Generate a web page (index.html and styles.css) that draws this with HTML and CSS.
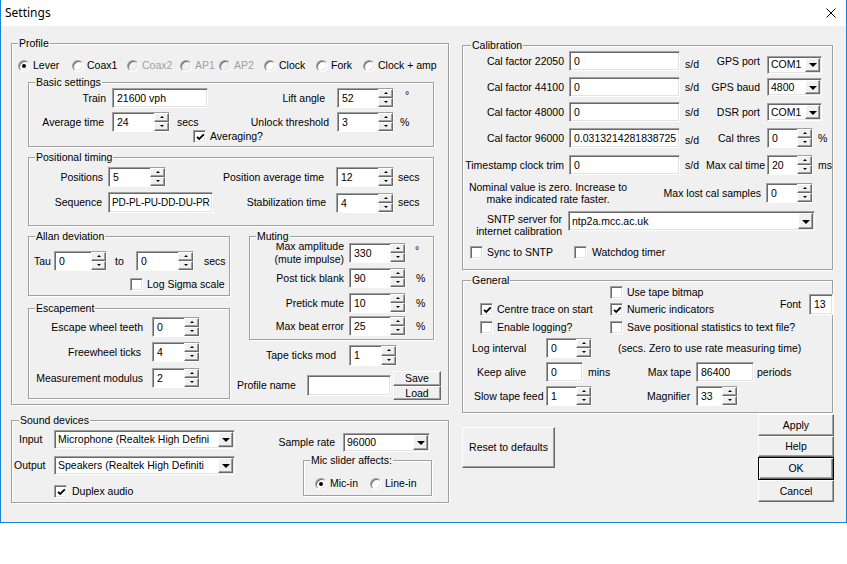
FILE: index.html
```html
<!DOCTYPE html>
<html>
<head>
<meta charset="utf-8">
<title>Settings</title>
<link rel="stylesheet" href="styles.css">
</head>
<body>
<div class="win">
  <div class="titlebar">
    <span class="title">Settings</span>
    <svg class="close" viewBox="0 0 10 10"><path d="M0.5 0.5L9.5 9.5M9.5 0.5L0.5 9.5" stroke="#000" stroke-width="1" fill="none"/></svg>
  </div>
  <div class="client">
    <div class="colL">
      <div class="grp g-profile">
        <span class="lg">Profile</span>
        <div class="radios">
          <span class="rb on w54"><i class="rd"></i>Lever</span>
          <span class="rb w55"><i class="rd"></i>Coax1</span>
          <span class="rb dis w53"><i class="rd"></i>Coax2</span>
          <span class="rb dis w39"><i class="rd"></i>AP1</span>
          <span class="rb dis w45"><i class="rd"></i>AP2</span>
          <span class="rb w52"><i class="rd"></i>Clock</span>
          <span class="rb w47"><i class="rd"></i>Fork</span>
          <span class="rb"><i class="rd"></i>Clock + amp</span>
        </div>

        <div class="grp g-basic">
          <span class="lg">Basic settings</span>
          <div class="row mt5">
            <span class="lbl r w77">Train</span>
            <span class="ed w96 ml6">21600 vph</span>
            <span class="lbl r w117">Lift angle</span>
            <span class="sp w57 ml12"><span class="v">52</span><span class="ud"><b class="up"></b><b class="dn"></b></span></span>
            <span class="ml11 deg">°</span>
          </div>
          <div class="row mt4">
            <span class="lbl r w75">Average time</span>
            <span class="sp w58 ml8"><span class="v">24</span><span class="ud"><b class="up"></b><b class="dn"></b></span></span>
            <span class="lbl w40 pl7">secs</span>
            <span class="lbl r w119">Unlock threshold</span>
            <span class="sp w57 ml8"><span class="v">3</span><span class="ud"><b class="up"></b><b class="dn"></b></span></span>
            <span class="ml6">%</span>
          </div>
          <div class="ckrow mtm2 ml164">
            <span class="ckb"><i class="ck on"><svg viewBox="0 0 9 9"><path d="M1 3.8L3.2 6L7.8 1.4" stroke="#000" stroke-width="1.8" fill="none"/></svg></i>Averaging?</span>
          </div>
        </div>

        <div class="grp g-pos">
          <span class="lg">Positional timing</span>
          <div class="row mt9">
            <span class="lbl r w74">Positions</span>
            <span class="sp w58 ml5"><span class="v">5</span><span class="ud"><b class="up"></b><b class="dn"></b></span></span>
            <span class="lbl r w158">Position average time</span>
            <span class="sp w58 ml12"><span class="v">12</span><span class="ud"><b class="up"></b><b class="dn"></b></span></span>
            <span class="ml4">secs</span>
          </div>
          <div class="row mt5 h21">
            <span class="lbl r w73">Sequence</span>
            <span class="ed w105 ml6 h21 tight">PD-PL-PU-DD-DU-PR</span>
            <span class="lbl r w113">Stabilization time</span>
            <span class="sp w58 ml10"><span class="v">4</span><span class="ud"><b class="up"></b><b class="dn"></b></span></span>
            <span class="ml4">secs</span>
          </div>
        </div>

        <div class="lower">
          <div class="lowL">
            <div class="grp g-allan">
              <span class="lg">Allan deviation</span>
              <div class="row mt14">
                <span class="lbl w20 ml5">Tau</span>
                <span class="sp w53"><span class="v">0</span><span class="ud"><b class="up"></b><b class="dn"></b></span></span>
                <span class="lbl w29 pl8">to</span>
                <span class="sp w58"><span class="v">0</span><span class="ud"><b class="up"></b><b class="dn"></b></span></span>
                <span class="pl10">secs</span>
              </div>
              <div class="ckrow mt7 ml101">
                <span class="ckb"><i class="ck"></i>Log Sigma scale</span>
              </div>
            </div>
            <div class="grp g-esc">
              <span class="lg">Escapement</span>
              <div class="row mt8">
                <span class="lbl r w114">Escape wheel teeth</span>
                <span class="sp w48 ml9"><span class="v">0</span><span class="ud"><b class="up"></b><b class="dn"></b></span></span>
              </div>
              <div class="row mt5">
                <span class="lbl r w112">Freewheel ticks</span>
                <span class="sp w48 ml11"><span class="v">4</span><span class="ud"><b class="up"></b><b class="dn"></b></span></span>
              </div>
              <div class="row mt6">
                <span class="lbl r w114">Measurement modulus</span>
                <span class="sp w48 ml9"><span class="v">2</span><span class="ud"><b class="up"></b><b class="dn"></b></span></span>
              </div>
            </div>
          </div>
          <div class="lowR">
            <div class="grp g-mute">
              <span class="lg">Muting</span>
              <div class="row mt6">
                <span class="lbl ra w94">Max amplitude<br>(mute impulse)</span>
                <span class="sp w57 ml5"><span class="v">330</span><span class="ud"><b class="up"></b><b class="dn"></b></span></span>
                <span class="ml9 deg">°</span>
              </div>
              <div class="row mt5">
                <span class="lbl r w94">Post tick blank</span>
                <span class="sp w57 ml5"><span class="v">90</span><span class="ud"><b class="up"></b><b class="dn"></b></span></span>
                <span class="ml10">%</span>
              </div>
              <div class="row mt5">
                <span class="lbl r w94">Pretick mute</span>
                <span class="sp w57 ml5"><span class="v">10</span><span class="ud"><b class="up"></b><b class="dn"></b></span></span>
                <span class="ml10">%</span>
              </div>
              <div class="row mt3">
                <span class="lbl r w94">Max beat error</span>
                <span class="sp w57 ml5"><span class="v">25</span><span class="ud"><b class="up"></b><b class="dn"></b></span></span>
                <span class="ml10">%</span>
              </div>
            </div>
            <div class="row mt5 h21">
              <span class="lbl r w87">Tape ticks mod</span>
              <span class="sp w48 ml13 h21"><span class="v">1</span><span class="ud"><b class="up"></b><b class="dn"></b></span></span>
            </div>
            <div class="row mt5 h29 mlm12">
              <span class="lbl w70">Profile name</span>
              <span class="ed w84 h21"></span>
              <span class="savload ml2">
                <span class="btn h15">Save</span>
                <span class="btn h14">Load</span>
              </span>
            </div>
          </div>
        </div>
      </div>

      <div class="grp g-sound">
        <span class="lg lg7">Sound devices</span>
        <div class="snd">
          <div class="sndL">
            <div class="row mt9 h19">
              <span class="lbl w35 ml7">Input</span>
              <span class="cb w181"><span class="v">Microphone (Realtek High Defini</span><span class="dd"><i></i></span></span>
            </div>
            <div class="row mt7 h19">
              <span class="lbl w40 ml2">Output</span>
              <span class="cb w181"><span class="v">Speakers (Realtek High Definiti</span><span class="dd"><i></i></span></span>
            </div>
            <div class="ckrow mt10 ml42">
              <span class="ckb gap5"><i class="ck on"><svg viewBox="0 0 9 9"><path d="M1 3.8L3.2 6L7.8 1.4" stroke="#000" stroke-width="1.8" fill="none"/></svg></i>Duplex audio</span>
            </div>
          </div>
          <div class="sndR">
            <div class="row mt12 h19 mr2">
              <span class="lbl">Sample rate</span>
              <span class="cb w87 ml8"><span class="v">96000</span><span class="dd"><i></i></span></span>
            </div>
            <div class="grp g-mic">
              <span class="lg">Mic slider affects:</span>
              <div class="radios mic">
                <span class="rb on w55"><i class="rd"></i>Mic-in</span>
                <span class="rb"><i class="rd"></i>Line-in</span>
              </div>
            </div>
          </div>
        </div>
      </div>
    </div>

    <div class="colR">
      <div class="grp g-cal">
        <span class="lg lg8">Calibration</span>
        <div class="row mt5">
          <span class="lbl r w101">Cal factor 22050</span>
          <span class="ed w111 ml5">0</span>
          <span class="lbl w30 pl5 low">s/d</span>
          <span class="lbl r w50">GPS port</span>
          <span class="cb w55 ml7 h18 low7"><span class="v">COM1</span><span class="dd"><i></i></span></span>
        </div>
        <div class="row mt6">
          <span class="lbl r w101">Cal factor 44100</span>
          <span class="ed w111 ml5">0</span>
          <span class="lbl w30 pl5">s/d</span>
          <span class="lbl r w50">GPS baud</span>
          <span class="cb w55 ml7 h18"><span class="v">4800</span><span class="dd"><i></i></span></span>
        </div>
        <div class="row mt5">
          <span class="lbl r w101">Cal factor 48000</span>
          <span class="ed w111 ml5">0</span>
          <span class="lbl w30 pl5">s/d</span>
          <span class="lbl r w50">DSR port</span>
          <span class="cb w55 ml7 h18"><span class="v">COM1</span><span class="dd"><i></i></span></span>
        </div>
        <div class="row mt6">
          <span class="lbl r w101">Cal factor 96000</span>
          <span class="ed w111 ml5">0.0313214281838725</span>
          <span class="lbl w30 pl5 low4">s/d</span>
          <span class="lbl r w50">Cal thres</span>
          <span class="sp w46 ml7"><span class="v">0</span><span class="ud"><b class="up"></b><b class="dn"></b></span></span>
          <span class="ml5">%</span>
        </div>
        <div class="row mt7">
          <span class="lbl r w101">Timestamp clock trim</span>
          <span class="ed w111 ml5">0</span>
          <span class="lbl w30 pl5">s/d</span>
          <span class="lbl r w55">Max cal time</span>
          <span class="sp w46 ml2"><span class="v">20</span><span class="ud"><b class="up"></b><b class="dn"></b></span></span>
          <span class="ml5">ms</span>
        </div>
        <div class="row mt6 h24">
          <span class="note w170">Nominal value is zero. Increase to<br>make indicated rate faster.</span>
          <span class="lbl r w128">Max lost cal samples</span>
          <span class="sp w47 ml5"><span class="v">0</span><span class="ud"><b class="up"></b><b class="dn"></b></span></span>
        </div>
        <div class="row mt6 h26 top">
          <span class="lbl ra lh12 w99 mt2">SNTP server for<br>internet calibration</span>
          <span class="cb w247 ml6 h20"><span class="v">ntp2a.mcc.ac.uk</span><span class="dd"><i></i></span></span>
        </div>
        <div class="ckrow mt9 ml7">
          <span class="ckb w104"><i class="ck"></i>Sync to SNTP</span>
          <span class="ckb gap5"><i class="ck"></i>Watchdog timer</span>
        </div>
      </div>

      <div class="grp g-gen">
        <span class="lg lg8">General</span>
        <div class="gen-top">
          <span class="ckb c2 r1"><i class="ck"></i>Use tape bitmap</span>
          <span class="ckb c1 r2"><i class="ck on"><svg viewBox="0 0 9 9"><path d="M1 3.8L3.2 6L7.8 1.4" stroke="#000" stroke-width="1.8" fill="none"/></svg></i>Centre trace on start</span>
          <span class="ckb c2 r2"><i class="ck on"><svg viewBox="0 0 9 9"><path d="M1 3.8L3.2 6L7.8 1.4" stroke="#000" stroke-width="1.8" fill="none"/></svg></i>Numeric indicators</span>
          <span class="ckb c1 r3"><i class="ck"></i>Enable logging?</span>
          <span class="ckb c2s r3"><i class="ck"></i>Save positional statistics to text file?</span>
          <span class="font-cell">
            <span>Font</span>
            <span class="ed w24 h21 ml8">13</span>
          </span>
        </div>
        <div class="row mt4">
          <span class="lbl w83 pl9">Log interval</span>
          <span class="sp w46"><span class="v">0</span><span class="ud"><b class="up"></b><b class="dn"></b></span></span>
          <span class="ml26">(secs. Zero to use rate measuring time)</span>
        </div>
        <div class="row mt4">
          <span class="lbl w83 pl14">Keep alive</span>
          <span class="ed w37">0</span>
          <span class="lbl w57 pl5">mins</span>
          <span class="lbl r w51">Max tape</span>
          <span class="ed w58 ml5">86400</span>
          <span class="ml3">periods</span>
        </div>
        <div class="row mt4">
          <span class="lbl w83 pl11">Slow tape feed</span>
          <span class="sp w46"><span class="v">1</span><span class="ud"><b class="up"></b><b class="dn"></b></span></span>
          <span class="lbl w104 pl55">Magnifier</span>
          <span class="sp w42"><span class="v">33</span><span class="ud"><b class="up"></b><b class="dn"></b></span></span>
        </div>
      </div>

      <div class="btnrow">
        <span class="btn w93 h41 mt13">Reset to defaults</span>
        <div class="bcol">
          <span class="btn h22">Apply</span>
          <span class="btn h21">Help</span>
          <span class="btn def h23">OK</span>
          <span class="btn h22">Cancel</span>
        </div>
      </div>
    </div>
  </div>
</div>
</body>
</html>
```

FILE: styles.css
```css
* { box-sizing: border-box; }
html, body { margin: 0; padding: 0; background: #fff; }
body { font: 10.5px/13px "Liberation Sans", Arial, sans-serif; color: #000; }

.win {
  width: 847px; height: 523px;
  border: 1px solid #1883d7; border-top: 0;
  display: flex; flex-direction: column;
}
.titlebar {
  height: 26px; flex: none; background: #fff;
  display: flex; align-items: center; justify-content: space-between;
  padding: 0 10px 0 4px;
}
.title { font: 12px/16px "Noto Sans", "Open Sans", sans-serif; }
.close { width: 10px; height: 10px; display: block; }

.client { flex: 1; background: #f0f0f0; display: flex; align-items: flex-start; }
.colL { margin-left: 10px; width: 438px; }
.colR { margin-left: 13px; width: 372px; }

/* group boxes */
.grp {
  position: relative;
  border: 1px solid #a0a0a0;
  box-shadow: inset 1px 1px #fff, 1px 1px #fff;
}
.lg {
  position: absolute; top: -7px; left: 6px;
  padding: 0 1px; background: #f0f0f0; white-space: nowrap; line-height: 13px;
}
.lg7 { left: 7px; }
.lg8 { left: 8px; }

.g-profile { margin-top: 17px; width: 438px; height: 362px; }
.g-basic { margin: 10px 0 0 16px; width: 406px; height: 65px; }
.g-pos { margin: 10px 0 0 16px; width: 406px; height: 69px; }
.lower { display: flex; margin: 10px 0 0 16px; }
.lowR { margin-left: 19px; }
.g-allan { width: 202px; height: 60px; }
.g-esc { margin-top: 12px; width: 202px; height: 91px; }
.g-mute { width: 185px; height: 104px; }
.g-sound { margin-top: 15px; width: 438px; height: 83px; }
.snd { display: flex; }
.sndL { width: 258px; }
.sndR { width: 162px; display: flex; flex-direction: column; align-items: flex-end; }
.g-mic { margin-top: 8px; width: 129px; height: 36px; }
.g-cal { margin-top: 19px; width: 371px; height: 225px; }
.g-gen { margin-top: 10px; width: 371px; height: 133px; }

/* rows */
.row { display: flex; align-items: center; height: 20px; white-space: nowrap; }
.row.top { align-items: flex-start; }
.ckrow { display: flex; align-items: center; height: 13px; white-space: nowrap; }
.lbl { flex: none; white-space: nowrap; }
.r { display: flex; justify-content: flex-end; }
.ra { text-align: right; }
.lh12 { line-height: 12px; }
.note { flex: none; text-align: center; line-height: 12px; }
.deg { align-self: flex-start; margin-top: 1px; }
.low { margin-top: 7px; }
.low4 { margin-top: 4px; }
.low7 { margin-top: 7px; }
.ed.tight { padding-left: 3px; font-size: 10px; letter-spacing: -0.1px; }

/* radios */
.radios { display: flex; align-items: center; height: 13px; margin: 15px 0 0 6px; white-space: nowrap; }
.radios.mic { margin: 16px 0 0 11px; }
.rb { display: flex; align-items: center; gap: 3px; flex: none; }
.rd {
  position: relative; display: block; flex: none;
  width: 12px; height: 12px; border-radius: 50%;
  background: #fff;
  border: 1px solid; border-color: #a0a0a0 #fff #fff #a0a0a0;
  box-shadow: inset 1px 1px #696969, inset -1px -1px #e3e3e3;
}
.rb.on .rd::after {
  content: ""; position: absolute; left: 3px; top: 3px;
  width: 4px; height: 4px; border-radius: 50%; background: #000;
}
.rb.dis { color: #a0a0a0; }
.rb.dis .rd { background: #f0f0f0; }

/* checkboxes */
.ckb { display: flex; align-items: center; gap: 4px; flex: none; white-space: nowrap; }
.gap5 { gap: 5px; }
.ck {
  display: flex; align-items: center; justify-content: center; flex: none;
  width: 13px; height: 13px; background: #fff;
  border: 1px solid; border-color: #a0a0a0 #fff #fff #a0a0a0;
  box-shadow: inset 1px 1px #696969, inset -1px -1px #e3e3e3;
}
.ck svg { width: 9px; height: 9px; display: block; margin: 1px 0 0 1px; }

/* edit fields */
.ed {
  flex: none; display: block; height: 20px;
  background: #fff;
  border: 1px solid; border-color: #a0a0a0 #fff #fff #a0a0a0;
  box-shadow: inset 1px 1px #696969, inset -1px -1px #e3e3e3;
  padding-left: 4px; line-height: 18px;
  white-space: nowrap; overflow: hidden;
}
.ed.h21 { height: 21px; line-height: 19px; }

/* spinners */
.sp {
  flex: none; display: flex; height: 20px;
  background: #fff;
  border: 1px solid; border-color: #a0a0a0 #fff #fff #a0a0a0;
  box-shadow: inset 1px 1px #696969;
}
.sp.h21 { height: 21px; }
.sp .v { flex: 1; padding-left: 4px; line-height: 18px; overflow: hidden; }
.ud { width: 15px; display: flex; flex-direction: column; flex: none; }
.ud b {
  flex: 1; display: flex; align-items: center; justify-content: center;
  background: #f0f0f0;
  border: 1px solid; border-color: #fff #696969 #696969 #fff;
  box-shadow: inset -1px -1px #a0a0a0;
}
.ud b::after { content: ""; width: 0; height: 0; border-left: 2px solid transparent; border-right: 2px solid transparent; }
.ud b.up::after { border-bottom: 2px solid #000; margin-top: -1px; }
.ud b.dn::after { border-top: 2px solid #000; margin-top: -1px; }

/* combo boxes */
.cb {
  flex: none; display: flex; height: 19px; padding: 1px;
  background: #fff;
  border: 1px solid; border-color: #a0a0a0 #fff #fff #a0a0a0;
  box-shadow: inset 1px 1px #696969, inset -1px -1px #e3e3e3;
}
.cb.h18 { height: 18px; }
.cb.h20 { height: 20px; }
.cb .v { flex: 1; padding-left: 2px; overflow: hidden; white-space: nowrap; display: flex; align-items: center; }
.dd {
  width: 15px; flex: none; display: flex; align-items: center; justify-content: center;
  background: #f0f0f0;
  border: 1px solid; border-color: #fff #696969 #696969 #fff;
  box-shadow: inset -1px -1px #a0a0a0;
}
.dd i { width: 0; height: 0; border-left: 4px solid transparent; border-right: 4px solid transparent; border-top: 4px solid #000; margin: 1px 0 0 0; }

/* buttons */
.btn {
  flex: none; display: flex; align-items: center; justify-content: center;
  background: #f0f0f0;
  border: 1px solid; border-color: #fff #696969 #696969 #fff;
  box-shadow: inset -1px -1px #a0a0a0;
  white-space: nowrap;
}
.btn.def {
  border-color: #000;
  box-shadow: inset 1px 1px #fff, inset -1px -1px #696969, inset -2px -2px #a0a0a0;
}
.savload { display: flex; flex-direction: column; width: 48px; align-self: stretch; }
.btnrow { display: flex; align-items: flex-start; margin-top: 1px; width: 372px; }
.bcol { margin-left: auto; width: 76px; display: flex; flex-direction: column; }

/* general grid */
.gen-top {
  display: grid; margin-top: 5px; padding-left: 17px;
  grid-template-columns: 130px 170px 52px;
  grid-template-rows: 17px 18px 13px;
  white-space: nowrap;
}
.gen-top .ckb { height: 13px; align-self: start; }
.c1 { grid-column: 1; }
.c2 { grid-column: 2; }
.c2s { grid-column: 2 / 4; }
.r1 { grid-row: 1; }
.r2 { grid-row: 2; }
.r3 { grid-row: 3; }
.font-cell { grid-column: 3; grid-row: 1 / 3; align-self: start; margin-top: 8px; display: flex; align-items: center; }

/* sizes */
.h14 { height: 14px; } .h15 { height: 15px; } .h19 { height: 19px; } .h21 { height: 21px; }
.h22 { height: 22px; } .h23 { height: 23px; } .h24 { height: 24px; } .h26 { height: 26px; }
.h29 { height: 29px; } .h41 { height: 41px; }
.w20 { width: 20px; } .w24 { width: 24px; } .w29 { width: 29px; } .w30 { width: 30px; }
.w35 { width: 35px; } .w37 { width: 37px; } .w39 { width: 39px; } .w40 { width: 40px; }
.w42 { width: 42px; } .w45 { width: 45px; } .w46 { width: 46px; } .w47 { width: 47px; }
.w48 { width: 48px; } .w50 { width: 50px; } .w51 { width: 51px; } .w52 { width: 52px; }
.w53 { width: 53px; } .w54 { width: 54px; } .w55 { width: 55px; } .w57 { width: 57px; }
.w58 { width: 58px; } .w70 { width: 70px; } .w73 { width: 73px; } .w74 { width: 74px; }
.w75 { width: 75px; } .w77 { width: 77px; } .w83 { width: 83px; } .w84 { width: 84px; }
.w87 { width: 87px; } .w93 { width: 93px; } .w94 { width: 94px; } .w96 { width: 96px; }
.w99 { width: 99px; } .w101 { width: 101px; } .w104 { width: 104px; } .w105 { width: 105px; }
.w111 { width: 111px; } .w112 { width: 112px; } .w113 { width: 113px; } .w114 { width: 114px; } .w117 { width: 117px; }
.w119 { width: 119px; } .w128 { width: 128px; } .w158 { width: 158px; } .w170 { width: 170px; }
.w181 { width: 181px; } .w247 { width: 247px; }

.mt2 { margin-top: 2px; } .mt3 { margin-top: 3px; } .mt4 { margin-top: 4px; } .mt5 { margin-top: 5px; }
.mt6 { margin-top: 6px; } .mt7 { margin-top: 7px; } .mt8 { margin-top: 8px; } .mt9 { margin-top: 9px; }
.mt10 { margin-top: 10px; } .mt12 { margin-top: 12px; } .mt13 { margin-top: 13px; } .mt14 { margin-top: 14px; }
.mtm2 { margin-top: -2px; }
.ml2 { margin-left: 2px; } .ml3 { margin-left: 3px; } .ml4 { margin-left: 4px; } .ml5 { margin-left: 5px; }
.ml6 { margin-left: 6px; } .ml7 { margin-left: 7px; } .ml8 { margin-left: 8px; } .ml9 { margin-left: 9px; }
.ml10 { margin-left: 10px; } .ml11 { margin-left: 11px; } .ml12 { margin-left: 12px; } .ml13 { margin-left: 13px; }
.ml26 { margin-left: 26px; } .ml42 { margin-left: 42px; } .ml101 { margin-left: 101px; } .ml164 { margin-left: 164px; }
.mlm12 { margin-left: -12px; }
.mr2 { margin-right: 2px; }
.pl5 { padding-left: 5px; } .pl7 { padding-left: 7px; } .pl8 { padding-left: 8px; } .pl9 { padding-left: 9px; }
.pl10 { padding-left: 10px; } .pl11 { padding-left: 11px; } .pl14 { padding-left: 14px; } .pl55 { padding-left: 55px; }
```
